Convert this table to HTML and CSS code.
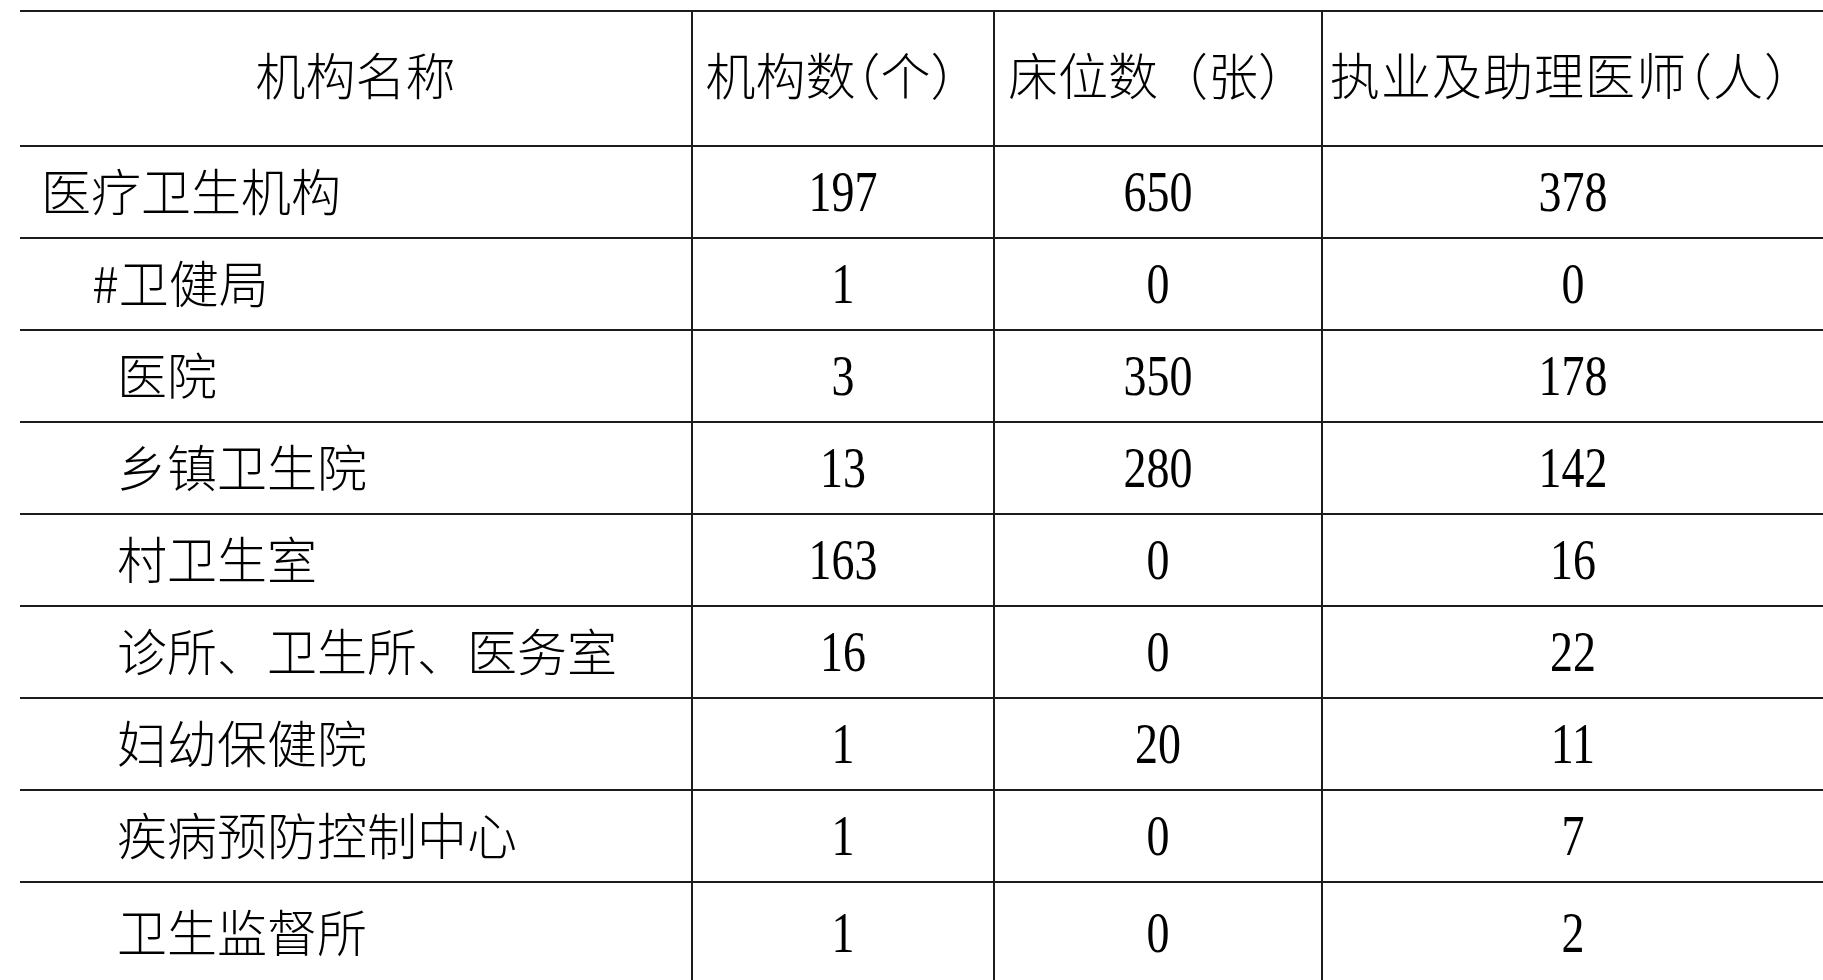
FILE: index.html
```html
<!DOCTYPE html>
<html lang="zh-CN">
<head>
<meta charset="utf-8">
<title>医疗卫生机构</title>
<link rel="stylesheet" href="styles.css">
</head>
<body>
<table class="stats">
  <colgroup>
    <col class="c-name">
    <col class="c-org">
    <col class="c-bed">
    <col class="c-doc">
  </colgroup>
  <thead>
    <tr>
      <th>机构名称</th>
      <th>机构数<span class="lp">（</span>个）</th>
      <th>床位数（张）</th>
      <th class="doc">执业及助理医师<span class="lp">（</span>人）</th>
    </tr>
  </thead>
  <tbody>
    <tr>
      <td class="name top">医疗卫生机构</td>
      <td><span class="num">197</span></td>
      <td><span class="num">650</span></td>
      <td class="doc"><span class="num">378</span></td>
    </tr>
    <tr>
      <td class="name hash">#卫健局</td>
      <td><span class="num">1</span></td>
      <td><span class="num">0</span></td>
      <td class="doc"><span class="num">0</span></td>
    </tr>
    <tr>
      <td class="name sub">医院</td>
      <td><span class="num">3</span></td>
      <td><span class="num">350</span></td>
      <td class="doc"><span class="num">178</span></td>
    </tr>
    <tr>
      <td class="name sub">乡镇卫生院</td>
      <td><span class="num">13</span></td>
      <td><span class="num">280</span></td>
      <td class="doc"><span class="num">142</span></td>
    </tr>
    <tr>
      <td class="name sub">村卫生室</td>
      <td><span class="num">163</span></td>
      <td><span class="num">0</span></td>
      <td class="doc"><span class="num">16</span></td>
    </tr>
    <tr>
      <td class="name sub">诊所、卫生所、医务室</td>
      <td><span class="num">16</span></td>
      <td><span class="num">0</span></td>
      <td class="doc"><span class="num">22</span></td>
    </tr>
    <tr>
      <td class="name sub">妇幼保健院</td>
      <td><span class="num">1</span></td>
      <td><span class="num">20</span></td>
      <td class="doc"><span class="num">11</span></td>
    </tr>
    <tr>
      <td class="name sub">疾病预防控制中心</td>
      <td><span class="num">1</span></td>
      <td><span class="num">0</span></td>
      <td class="doc"><span class="num">7</span></td>
    </tr>
    <tr class="last">
      <td class="name sub">卫生监督所</td>
      <td><span class="num">1</span></td>
      <td><span class="num">0</span></td>
      <td class="doc"><span class="num">2</span></td>
    </tr>
  </tbody>
</table>
</body>
</html>
```
FILE: styles.css
```css
html, body {
  margin: 0;
  padding: 0;
  background: #ffffff;
  overflow: hidden;
}

body {
  width: 1823px;
  height: 980px;
  font-family: "Noto Sans CJK SC", "Noto Sans", sans-serif;
  color: #000000;
}

.stats {
  margin: 10px 0 0 20px;
  width: 1810px;
  border-collapse: collapse;
  table-layout: fixed;
  border-top: 2px solid #1c1c1c;
}

.c-name { width: 672px; }
.c-org { width: 302px; }
.c-bed { width: 328px; }
.c-doc { width: 508px; }

.stats th,
.stats td {
  padding: 0;
  font-size: 50px;
  font-weight: 300;
  line-height: 1;
  text-align: center;
  vertical-align: middle;
  border-bottom: 2px solid #1c1c1c;
  border-left: 2px solid #1c1c1c;
  white-space: nowrap;
}

.stats th:first-child,
.stats td:first-child {
  border-left: none;
}

.stats th {
  height: 121px;
  padding-bottom: 12px;
}

.stats th .lp {
  font-feature-settings: "halt" 1;
}

.stats th.doc {
  letter-spacing: 1px;
}

.stats .doc {
  padding-right: 8px;
}

.stats td {
  height: 90px;
}

.stats tr.last td {
  height: 100px;
}

.stats td.name {
  text-align: left;
  height: 83px;
  padding-bottom: 7px;
}

.stats tr.last td.name {
  height: 93px;
}

.stats td.top {
  padding-left: 21px;
}

.stats td.sub {
  padding-left: 97px;
}

.stats td.hash {
  padding-left: 72px;
}

.num {
  display: inline-block;
  font-family: "Liberation Serif", "Times New Roman", serif;
  font-size: 56px;
  font-weight: 400;
  letter-spacing: 0;
  transform: scaleX(0.82);
}
```
